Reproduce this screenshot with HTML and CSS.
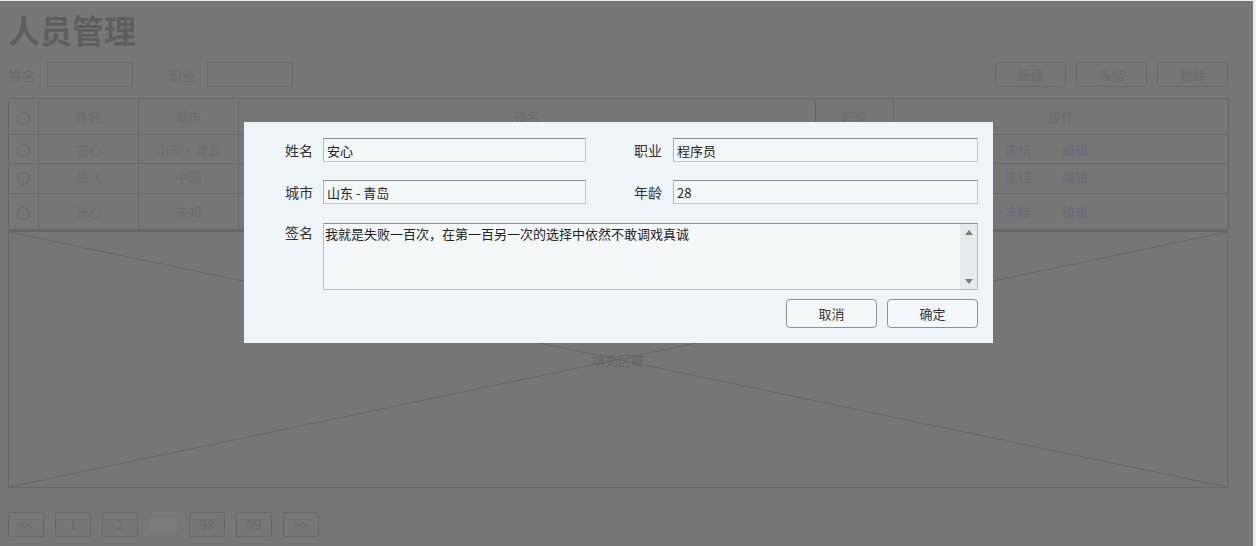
FILE: index.html
```html
<!DOCTYPE html>
<html lang="zh-CN">
<head>
<meta charset="utf-8">
<title>人员管理</title>
<link rel="stylesheet" href="styles.css">
</head>
<body>
<div class="page">
  <h1 class="title">人员管理</h1>
  <div class="filters">
    <label class="f-label">姓名</label><input class="f-input" type="text">
    <label class="f-label f-label-2">职业</label><input class="f-input" type="text">
    <div class="actions">
      <button class="btn">新建</button>
      <button class="btn">冻结</button>
      <button class="btn">删除</button>
    </div>
  </div>
  <table class="grid">
    <colgroup>
      <col class="c-radio"><col class="c-name"><col class="c-city"><col class="c-sign"><col class="c-job"><col class="c-op">
    </colgroup>
    <thead>
      <tr class="h-row"><th><span class="radio"></span></th><th>姓名</th><th>城市</th><th>签名</th><th>职业</th><th>操作</th></tr>
    </thead>
    <tbody>
      <tr class="r1"><td><span class="radio"></span></td><td>安心</td><td>山东·青岛</td><td></td><td></td><td class="ops"><a class="link">冻结</a><a class="link">编辑</a></td></tr>
      <tr class="r2"><td><span class="radio"></span></td><td>岳飞</td><td>中国</td><td></td><td></td><td class="ops"><a class="link">冻结</a><a class="link">编辑</a></td></tr>
      <tr class="r3"><td><span class="radio"></span></td><td>贤心</td><td>未知</td><td></td><td></td><td class="ops"><a class="link">冻结</a><a class="link">编辑</a></td></tr>
    </tbody>
  </table>
  <div class="fill">
    <svg class="fill-x" viewBox="0 0 1220 258" preserveAspectRatio="none">
      <line x1="0" y1="0" x2="1220" y2="258" vector-effect="non-scaling-stroke"/>
      <line x1="0" y1="258" x2="1220" y2="0" vector-effect="non-scaling-stroke"/>
    </svg>
    <span class="fill-text">填充区域</span>
  </div>
  <div class="pager">
    <button class="pg">&lt;&lt;</button>
    <button class="pg">1</button>
    <button class="pg">2</button>
    <span class="pg-gap"></span>
    <button class="pg">98</button>
    <button class="pg">99</button>
    <button class="pg">&gt;&gt;</button>
  </div>
</div>

<div class="overlay"></div>

<div class="dialog">
  <div class="form">
    <label class="d-label">姓名</label>
    <input class="d-input" type="text" value="安心">
    <label class="d-label d-label-r">职业</label>
    <input class="d-input" type="text" value="程序员">

    <label class="d-label">城市</label>
    <input class="d-input" type="text" value="山东 - 青岛">
    <label class="d-label d-label-r">年龄</label>
    <input class="d-input" type="text" value="28">

    <label class="d-label d-label-top">签名</label>
    <div class="d-area">
      <textarea class="d-text">我就是失败一百次，在第一百另一次的选择中依然不敢调戏真诚</textarea>
      <div class="sbar">
        <span class="sb-up"></span>
        <span class="sb-down"></span>
      </div>
    </div>
  </div>
  <div class="d-actions">
    <button class="d-btn">取消</button>
    <button class="d-btn">确定</button>
  </div>
</div>
</body>
</html>
```

FILE: styles.css
```css
html, body {
  margin: 0;
  padding: 0;
}
body {
  background: #eeeeee;
  font-family: "Noto Sans CJK SC", "Noto Sans", sans-serif;
  color: #d8d8d8;
  width: 1256px;
  height: 546px;
  overflow: hidden;
}
.page {
  padding: 0 8px;
  width: 1220px;
}
.title {
  margin: 9px 0 0;
  font-size: 32px;
  line-height: 40px;
  font-weight: 700;
  color: #bcbcbc;
  letter-spacing: 0;
}
.filters {
  display: flex;
  align-items: center;
  margin-top: 13px;
  height: 25px;
}
.f-label {
  font-size: 14px;
  color: #d4d4d4;
  width: 39px;
}
.f-label-2 {
  margin-left: 35px;
}
.f-input {
  width: 86px;
  height: 25px;
  box-sizing: border-box;
  border: 1px solid #d2d2d2;
  background: #eeeeee;
  margin: 0;
  padding: 0;
}
.actions {
  margin-left: auto;
  display: flex;
  gap: 10px;
}
.btn {
  width: 71px;
  height: 25px;
  border: 1px solid #cfcfcf;
  border-radius: 4px;
  background: #eeeeee;
  color: #d4d4d4;
  font-family: inherit;
  font-size: 13px;
  padding: 0;
}
.grid {
  margin-top: 11px;
  width: 1220px;
  table-layout: fixed;
  border-collapse: collapse;
  font-size: 13px;
  color: #d8d8d8;
}
.c-radio { width: 30px; }
.c-name { width: 100px; }
.c-city { width: 100px; }
.c-sign { width: 577px; }
.c-job { width: 78px; }
.c-op { width: 335px; }
.grid th, .grid td {
  border: 1px solid #d0d0d0;
  text-align: center;
  font-weight: 400;
  padding: 0;
  vertical-align: middle;
}
.h-row { height: 36px; }
.r1 { height: 29px; }
.r2 { height: 30px; }
.r2 td { padding-bottom: 4px; }
.r3 { height: 36px; }
.radio {
  display: inline-block;
  width: 11px;
  height: 11px;
  border: 1px solid #d0d0d0;
  border-radius: 50%;
  vertical-align: middle;
}
.ops {
  text-align: left !important;
}
.link {
  color: #d3d3f6;
  margin-left: 111px;
}
.link + .link {
  margin-left: 31px;
}
.fill {
  position: relative;
  height: 258px;
  box-sizing: border-box;
  border: 1px solid #cfcfcf;
  border-top: 2px solid #cfcfcf;
  display: flex;
  align-items: center;
  justify-content: center;
}
.fill-x {
  position: absolute;
  inset: 0;
  width: 100%;
  height: 100%;
}
.fill-x line {
  stroke: #c8c8c8;
  stroke-width: 1;
}
.fill-text {
  position: relative;
  font-size: 13px;
  color: #c8c8c8;
  line-height: 16px;
}
.pager {
  display: flex;
  align-items: center;
  gap: 11px;
  margin-top: 24px;
}
.pg {
  width: 36px;
  height: 25px;
  border: 1px solid #d0d0d0;
  border-radius: 2px;
  background: #eeeeee;
  color: #d4d4d4;
  font-family: inherit;
  font-size: 13px;
  padding: 0;
}
.pg-gap {
  width: 29px;
  height: 14px;
  background: #f6f6f6;
}
.overlay {
  position: fixed;
  left: 0;
  top: 1px;
  right: 3px;
  bottom: 0;
  background: rgba(0, 0, 0, 0.5);
}
.dialog {
  position: absolute;
  left: 244px;
  top: 122px;
  width: 749px;
  height: 221px;
  box-sizing: border-box;
  background: #eef5f8;
  padding: 16px 15px 0 0;
  color: #333333;
}
.form {
  display: grid;
  grid-template-columns: 79px 263px 87px 305px;
  grid-template-rows: 24px 24px 67px;
  row-gap: 18px;
  align-items: center;
}
.form .d-area {
  grid-column: 2 / 5;
  margin-top: 1px;
}
.d-label {
  font-size: 14px;
  text-align: right;
  padding-right: 10px;
  color: #333333;
  line-height: 20px;
}
.d-label-r {
  padding-right: 11px;
}
.d-label-top {
  align-self: start;
  padding-top: 0;
}
.d-input {
  height: 24px;
  box-sizing: border-box;
  margin: 0;
  padding: 0 3px;
  border: 1px solid #c4c8ca;
  border-top-color: #8e8e8e;
  border-left-color: #b4b4b4;
  background: #f3f8fa;
  font-family: "Noto Sans CJK SC", "Noto Sans", sans-serif;
  font-size: 13px;
  color: #222222;
  outline: none;
}
.d-area {
  display: flex;
  height: 67px;
  box-sizing: border-box;
  border: 1px solid #b8bcbe;
  border-top-color: #8e8e8e;
  background: #f3f8fa;
}
.d-text {
  flex: 1;
  border: 0;
  margin: 0;
  padding: 1px 1px;
  background: transparent;
  resize: none;
  font-family: "Noto Sans CJK SC", "Noto Sans", sans-serif;
  font-size: 13px;
  line-height: 17px;
  color: #222222;
  outline: none;
  overflow: hidden;
}
.sbar {
  width: 17px;
  background: #e6ecee;
  display: flex;
  flex-direction: column;
  justify-content: space-between;
  align-items: center;
  padding: 6px 0 5px;
  box-sizing: border-box;
}
.sb-up, .sb-down {
  width: 0;
  height: 0;
  border-left: 4px solid transparent;
  border-right: 4px solid transparent;
}
.sb-up {
  border-bottom: 5px solid #7a7f82;
}
.sb-down {
  border-top: 5px solid #7a7f82;
}
.d-actions {
  display: flex;
  justify-content: flex-end;
  gap: 10px;
  margin-top: 10px;
}
.d-btn {
  width: 91px;
  height: 29px;
  border: 1px solid #8c9194;
  border-radius: 4px;
  background: #f3f8fa;
  font-family: "Noto Sans CJK SC", "Noto Sans", sans-serif;
  font-size: 13px;
  color: #333333;
  padding: 0;
}
```
